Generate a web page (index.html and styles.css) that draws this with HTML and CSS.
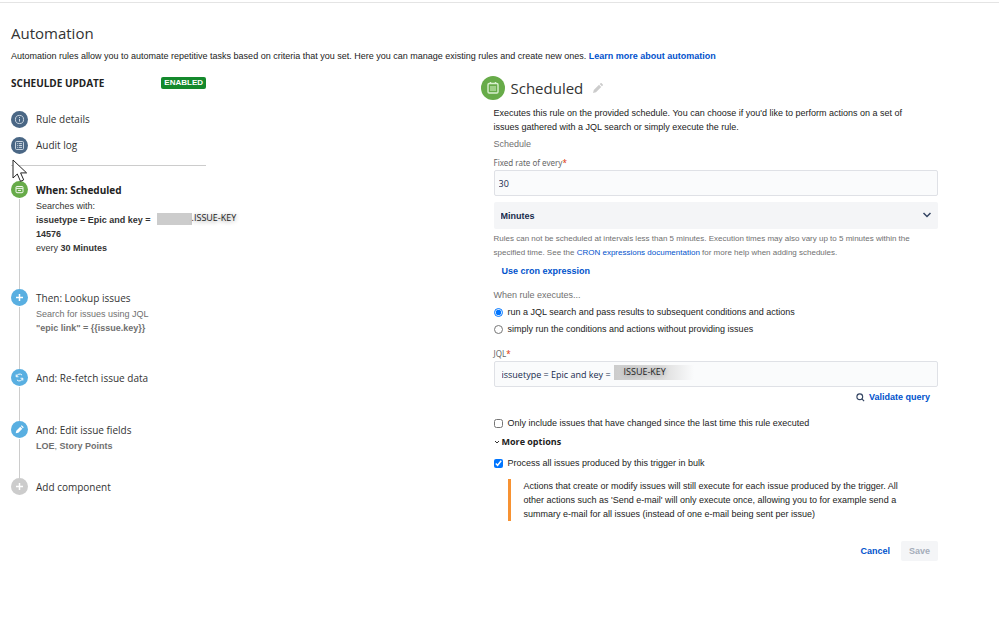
FILE: index.html
```html
<!DOCTYPE html>
<html lang="en">
<head>
  <meta charset="UTF-8">
  <meta name="viewport" content="width=device-width, initial-scale=1">
  <title>Automation</title>
  <link rel="stylesheet" href="styles.css">
</head>
<body>

  <!-- Page heading -->
  <header class="page-header">
    <h1>Automation</h1>
    <p>Automation rules allow you to automate repetitive tasks based on criteria that you set. Here you can manage existing rules and create new ones. <a href="#">Learn more about automation</a></p>
  </header>

  <main class="columns">

    <!-- Rule outline -->
    <section class="rule">
      <div class="rule-head">
        <h2>SCHEULDE UPDATE</h2>
        <span class="badge">ENABLED</span>
      </div>

      <nav class="rule-nav">
        <a href="#">
          <svg class="dot slate" viewBox="0 0 18 18"><circle cx="9" cy="9" r="4.3" /><path d="M9 8.4v2.8M9 6.4v1" /></svg>
          Rule details
        </a>
        <a href="#">
          <svg class="dot slate" viewBox="0 0 18 18"><rect x="4.8" y="4.8" width="8.4" height="8.4" rx="1" /><path d="M6.4 7h.8M8.2 7h3.4M6.4 9h.8M8.2 9h3.4M6.4 11h.8M8.2 11h3.4" /></svg>
          Audit log
        </a>
        <svg class="cursor" viewBox="0 0 16 24"><path d="M1 1v18l4.3-4 3.2 7.3 3.2-1.4-3.1-7h6z" /></svg>
      </nav>

      <ol class="steps">
        <li>
          <svg class="dot green" viewBox="0 0 18 18"><rect x="5.3" y="5.8" width="7.4" height="6.6" rx="1" /><path d="M5.5 7.8h7M7.5 10h3" /></svg>
          <div class="step-body dark">
            <h3 class="current">When: Scheduled</h3>
            <p>Searches with:</p>
            <p class="query"><b>issuetype = Epic and key =</b> <span class="masked"></span><span class="issue-key">.ISSUE-KEY</span></p>
            <p><b>14576</b></p>
            <p>every <b>30 Minutes</b></p>
          </div>
        </li>
        <li>
          <svg class="dot blue" viewBox="0 0 17 17"><path class="thick" d="M8.5 5v7M5 8.5h7" /></svg>
          <div class="step-body">
            <h3>Then: Lookup issues</h3>
            <p>Search for issues using JQL</p>
            <p><b>"epic link" = {{issue.key}}</b></p>
          </div>
        </li>
        <li>
          <svg class="dot blue" viewBox="0 0 18 18"><path d="M5.5 5.8v2.4h2.4M5.7 8a3.6 3.6 0 0 1 6-1.6M12.5 12.2V9.8h-2.4M12.3 10a3.6 3.6 0 0 1-6 1.6" /></svg>
          <div class="step-body">
            <h3>And: Re-fetch issue data</h3>
          </div>
        </li>
        <li class="short">
          <svg class="dot blue" viewBox="0 0 18 18"><path class="fill" d="M5 13l.6-2.8 4.2-4.2 2.2 2.2-4.2 4.2zM10.4 5.4l.9-.9 2.2 2.2-.9.9z" /></svg>
          <div class="step-body">
            <h3>And: Edit issue fields</h3>
            <p><b>LOE</b>, <b>Story Points</b></p>
          </div>
        </li>
        <li>
          <svg class="dot grey" viewBox="0 0 17 17"><path class="thick" d="M8.5 5v7M5 8.5h7" /></svg>
          <div class="step-body">
            <h3>Add component</h3>
          </div>
        </li>
      </ol>
    </section>

    <!-- Trigger settings -->
    <form class="panel">
      <div class="panel-head">
        <svg class="panel-icon" viewBox="0 0 24 24"><circle cx="12" cy="12" r="12" /><rect class="line" x="7" y="7.5" width="10" height="9.5" rx="1.2" /><path class="line" d="M9.5 6v2M14.5 6v2" /><rect class="sheet" x="9" y="10" width="6" height="5" /></svg>
        <h2>Scheduled</h2>
        <svg class="pencil" viewBox="0 0 10 10"><path d="M0 10l.8-3L6 1.8 8.2 4 3 9.2zM6.7 1.1l.9-.9c.3-.3.7-.3 1 0l1.2 1.2c.3.3.3.7 0 1l-.9.9z" /></svg>
      </div>

      <div class="panel-body">
        <p class="intro">Executes this rule on the provided schedule. You can choose if you'd like to perform actions on a set of issues gathered with a JQL search or simply execute the rule.</p>

        <p class="group-title">Schedule</p>
        <label class="field-label" for="rate">Fixed rate of every<em>*</em></label>
        <input class="text-box" type="text" id="rate" value="30">
        <div class="select-box">
          <select id="unit" aria-label="Unit">
            <option>Minutes</option>
            <option>Hours</option>
            <option>Days</option>
          </select>
          <svg viewBox="0 0 10 6"><path d="M1.5 1L5 4.5 8.5 1" /></svg>
        </div>
        <p class="help">Rules can not be scheduled at intervals less than 5 minutes. Execution times may also vary up to 5 minutes within the specified time. See the <a href="#">CRON expressions documentation</a> for more help when adding schedules.</p>
        <button type="button" class="link-btn cron">Use cron expression</button>

        <p class="group-title">When rule executes...</p>
        <label class="choice"><input type="radio" name="mode" checked>run a JQL search and pass results to subsequent conditions and actions</label>
        <label class="choice"><input type="radio" name="mode">simply run the conditions and actions without providing issues</label>

        <label class="field-label jql-label" for="jql">JQL<em>*</em></label>
        <div class="jql-box">
          <input class="text-box" type="text" id="jql" value="issuetype = Epic and key =">
          <span class="jql-key">ISSUE-KEY</span>
        </div>
        <button type="button" class="link-btn validate">
          <svg viewBox="0 0 10 10"><circle cx="4.2" cy="4.2" r="3.2" /><path d="M6.6 6.6L9 9" /></svg>
          Validate query
        </button>

        <label class="choice"><input type="checkbox">Only include issues that have changed since the last time this rule executed</label>
        <button type="button" class="more">
          <svg viewBox="0 0 6 6"><path d="M1 2l2 2 2-2" /></svg>
          More options
        </button>
        <label class="choice"><input type="checkbox" checked>Process all issues produced by this trigger in bulk</label>
        <p class="note">Actions that create or modify issues will still execute for each issue produced by the trigger. All other actions such as 'Send e-mail' will only execute once, allowing you to for example send a summary e-mail for all issues (instead of one e-mail being sent per issue)</p>

        <div class="actions">
          <button type="button" class="link-btn">Cancel</button>
          <button type="submit" class="save" disabled>Save</button>
        </div>
      </div>
    </form>

  </main>

</body>
</html>
```
FILE: styles.css
```css
* {
  box-sizing: border-box;
  margin: 0;
  padding: 0;
}

body {
  padding-top: 2px;
  font-family: "Liberation Sans", Arial, sans-serif;
  font-size: 9px;
  line-height: 14px;
  color: #222;
  background-color: #fff;
}

h1, h2, h3 {
  font-family: "Open Sans", "Noto Sans", sans-serif;
  font-weight: normal;
  color: #333;
}

a {
  color: #0052cc;
  text-decoration: none;
}

button, input, select {
  font: inherit;
  color: inherit;
}

.page-header {
  padding: 19px 11px 0;
  border-top: 1px solid #e4e4e4;
}

h1 {
  font-size: 15px;
  line-height: 22px;
}

.page-header p {
  margin-top: 5px;
}

.page-header a {
  font-weight: bold;
}

.columns {
  display: grid;
  grid-template-columns: minmax(0, 1fr) minmax(0, 1fr);
  gap: 12px;
  padding: 12px 61px 40px 11px;
}

/* Rule outline */
.rule-head,
.rule-nav {
  width: 195px;
}

.rule-head {
  display: flex;
  justify-content: space-between;
  align-items: center;
}

.rule-head h2 {
  font-size: 10px;
  line-height: 16px;
  font-weight: bold;
  color: #222;
}

.badge {
  padding: 0 3px;
  border-radius: 2px;
  background-color: #14892c;
  color: #fff;
  font-size: 8px;
  font-weight: bold;
  line-height: 12px;
}

.rule-nav {
  position: relative;
  display: flex;
  flex-direction: column;
  gap: 8px;
  padding: 19px 0 11px;
  border-bottom: 1px solid #ccc;
}

.rule-nav a {
  display: flex;
  align-items: center;
  gap: 8px;
  font-family: "Open Sans", "Noto Sans", sans-serif;
  font-size: 10px;
  line-height: 18px;
  color: #333;
}

.dot {
  flex: none;
  width: 17px;
  height: 17px;
  border-radius: 50%;
  fill: none;
  stroke: #fff;
  stroke-width: 1;
}

.dot .thick {
  stroke-width: 1.5;
}

.dot .fill {
  fill: #fff;
  stroke: none;
}

.slate {
  background-color: #4a6785;
  stroke: #d5dee8;
}

.green {
  background-color: #67ab49;
}

.blue {
  background-color: #59afe1;
}

.grey {
  background-color: #ccc;
}

.cursor {
  position: absolute;
  left: 1px;
  bottom: -18px;
  z-index: 1;
  width: 16px;
  height: 24px;
  fill: #fff;
  stroke: #222;
}

.steps {
  list-style: none;
  padding-top: 15px;
}

.steps li {
  position: relative;
  display: flex;
  gap: 8px;
  padding-bottom: 34px;
}

.steps li.short {
  padding-bottom: 25px;
}

/* line that joins one step to the next */
.steps li:not(:last-child)::before {
  content: "";
  position: absolute;
  left: 8px;
  top: 18px;
  bottom: 0;
  width: 1px;
  background-color: #ccc;
}

.steps h3 {
  font-size: 10px;
  line-height: 18px;
}

.steps .current {
  font-weight: bold;
  color: #222;
}

.step-body {
  color: #707070;
  white-space: nowrap;
}

.step-body.dark {
  color: #333;
}

.query {
  display: flex;
  align-items: flex-start;
  gap: 6px;
}

.masked {
  width: 35px;
  height: 12px;
  background-color: #ccc;
}

.issue-key,
.jql-key {
  font-family: "Open Sans", "Noto Sans", sans-serif;
  color: #222;
  text-shadow: 0 1px 4px #888;
}

.issue-key {
  margin-left: -6px;
  line-height: 10px;
}

/* Trigger settings */
.panel-head {
  display: flex;
  align-items: center;
  gap: 6px;
  height: 26px;
}

.panel-head h2 {
  font-size: 15px;
  line-height: 22px;
}

.panel-icon {
  width: 24px;
  height: 24px;
  fill: #67ab49;
}

.panel-icon .line {
  fill: none;
  stroke: #d9f0cf;
  stroke-width: 1.4;
}

.panel-icon .sheet {
  fill: #9fd088;
}

.pencil {
  width: 10px;
  height: 10px;
  margin-left: 4px;
  fill: #ccc;
}

.panel-body {
  padding-left: 13px;
}

.intro {
  margin-top: 5px;
  padding-right: 24px;
}

.group-title {
  margin-top: 3px;
  color: #707070;
}

.field-label {
  display: block;
  margin-top: 5px;
  font-family: "Noto Sans", "Open Sans", sans-serif;
  font-size: 8px;
  line-height: 14px;
  color: #666;
}

.field-label em {
  color: #de350b;
  font-style: normal;
}

.text-box {
  display: block;
  width: 100%;
  height: 26px;
  padding: 0 7px;
  border: 1px solid #dfe1e6;
  border-radius: 2px;
  background-color: #fafbfc;
  color: #172b4d;
  font-family: "Open Sans", "Noto Sans", sans-serif;
}

#rate {
  padding: 0 4px;
}

.select-box {
  position: relative;
  margin-top: 6px;
}

.select-box select {
  display: block;
  width: 100%;
  height: 27px;
  padding: 0 7px;
  border: none;
  border-radius: 2px;
  background-color: #f4f5f7;
  color: #172b4d;
  font-weight: bold;
  appearance: none;
}

.select-box svg {
  position: absolute;
  right: 6px;
  top: 10px;
  width: 10px;
  height: 6px;
  fill: none;
  stroke: #344563;
  stroke-width: 1.5;
  pointer-events: none;
}

.help {
  margin-top: 3px;
  font-size: 8px;
  color: #707070;
}

.link-btn {
  border: none;
  background: none;
  color: #0052cc;
  font-weight: bold;
  cursor: pointer;
}

.cron {
  display: block;
  margin: 4px 0 10px 8px;
}

.choice {
  display: flex;
  align-items: center;
  gap: 5px;
  margin-top: 3px;
}

.choice input {
  width: 9px;
  height: 9px;
  accent-color: #0075ff;
}

.jql-label {
  margin-top: 11px;
}

.jql-box {
  position: relative;
}

.jql-key {
  position: absolute;
  left: 120px;
  top: 4px;
  width: 80px;
  height: 15px;
  padding-left: 10px;
  background-image: linear-gradient(to right, #ccc, #ddd 60%, transparent);
}

.validate {
  display: flex;
  align-items: center;
  gap: 4px;
  margin: 3px 8px 12px auto;
}

.validate svg {
  width: 9px;
  height: 9px;
  fill: none;
  stroke: #344563;
  stroke-width: 1.3;
}

.more {
  display: flex;
  align-items: center;
  gap: 2px;
  margin: 5px 0 7px;
  border: none;
  background: none;
  font-family: "Open Sans", "Noto Sans", sans-serif;
  font-weight: bold;
  cursor: pointer;
}

.more svg {
  width: 6px;
  height: 6px;
  fill: none;
  stroke: #333;
}

.note {
  margin: 9px 0 0 14px;
  padding: 0 24px 0 13px;
  border-left: 3px solid #f79232;
}

.actions {
  display: flex;
  justify-content: flex-end;
  gap: 11px;
  margin-top: 20px;
}

.save {
  height: 20px;
  padding: 0 8px;
  border: none;
  border-radius: 2px;
  background-color: #f4f5f7;
  color: #a5adba;
  font-weight: bold;
}
```
